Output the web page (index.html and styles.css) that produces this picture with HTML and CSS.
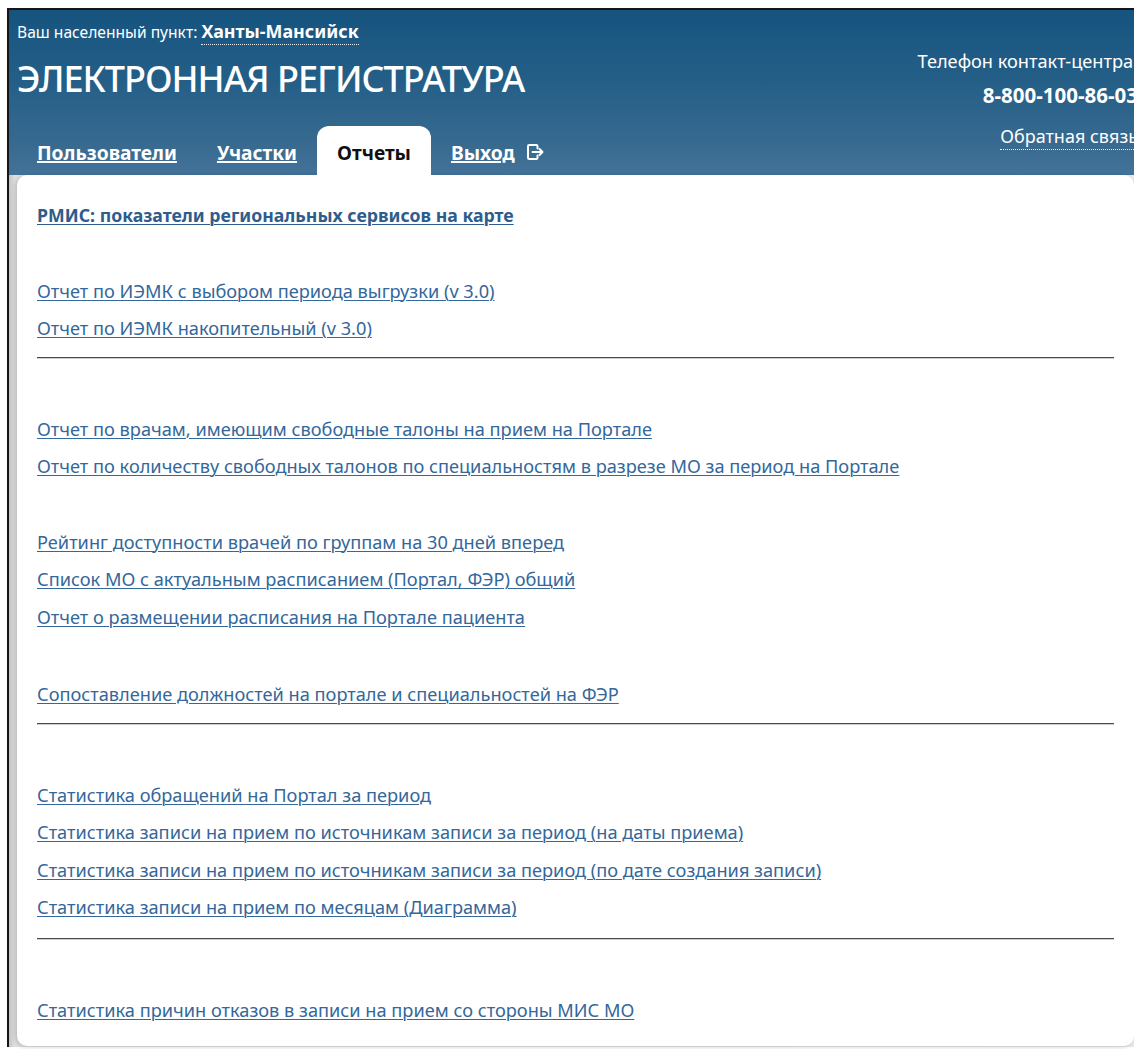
FILE: index.html
```html
<!DOCTYPE html>
<html lang="ru">
<head>
<meta charset="utf-8">
<title>Электронная регистратура — Отчеты</title>
<link rel="stylesheet" href="styles.css">
</head>
<body>
<div class="frame">
  <header class="header">
    <div class="brand">
      <div class="location">Ваш населенный пункт: <a class="city" href="#">Ханты-Мансийск</a></div>
      <h1 class="title">ЭЛЕКТРОННАЯ РЕГИСТРАТУРА</h1>
      <nav class="tabs">
        <a class="tab" href="#"><span class="tab-label">Пользователи</span></a>
        <a class="tab" href="#"><span class="tab-label">Участки</span></a>
        <span class="tab tab-active">Отчеты</span>
        <a class="tab" href="#"><span class="tab-label">Выход</span><svg class="exit-icon" viewBox="0 0 18 18" width="18" height="18" aria-hidden="true"><path d="M11.5 5.5V3.2a1.2 1.2 0 0 0-1.2-1.2H3.2A1.2 1.2 0 0 0 2 3.2v11.6A1.2 1.2 0 0 0 3.2 16h7.1a1.2 1.2 0 0 0 1.2-1.2v-2.3" fill="none" stroke="#fff" stroke-width="2" stroke-linecap="round"/><path d="M6.5 9H16.5M13.5 6l3 3-3 3" fill="none" stroke="#fff" stroke-width="2" stroke-linecap="round" stroke-linejoin="round"/></svg></a>
      </nav>
    </div>
    <div class="contacts">
      <div class="contacts-label">Телефон контакт-центра:</div>
      <div class="contacts-phone">8-800-100-86-03</div>
      <div class="contacts-feedback"><a href="#">Обратная связь</a></div>
    </div>
  </header>

  <main class="panel">
    <div class="group">
      <a class="report report-main" href="#">РМИС: показатели региональных сервисов на карте</a>
    </div>
    <div class="group">
      <a class="report" href="#">Отчет по ИЭМК с выбором периода выгрузки (v 3.0)</a>
      <a class="report" href="#">Отчет по ИЭМК накопительный (v 3.0)</a>
    </div>
    <hr class="divider">
    <div class="group group-first">
      <a class="report" href="#">Отчет по врачам, имеющим свободные талоны на прием на Портале</a>
      <a class="report" href="#">Отчет по количеству свободных талонов по специальностям в разрезе МО за период на Портале</a>
    </div>
    <div class="group">
      <a class="report" href="#">Рейтинг доступности врачей по группам на 30 дней вперед</a>
      <a class="report" href="#">Список МО с актуальным расписанием (Портал, ФЭР) общий</a>
      <a class="report" href="#">Отчет о размещении расписания на Портале пациента</a>
    </div>
    <div class="group group-wide">
      <a class="report" href="#">Сопоставление должностей на портале и специальностей на ФЭР</a>
    </div>
    <hr class="divider">
    <div class="group group-first">
      <a class="report" href="#">Статистика обращений на Портал за период</a>
      <a class="report" href="#">Статистика записи на прием по источникам записи за период (на даты приема)</a>
      <a class="report" href="#">Статистика записи на прием по источникам записи за период (по дате создания записи)</a>
      <a class="report" href="#">Статистика записи на прием по месяцам (Диаграмма)</a>
    </div>
    <hr class="divider divider-low">
    <div class="group group-first">
      <a class="report" href="#">Статистика причин отказов в записи на прием со стороны МИС МО</a>
    </div>
  </main>
</div>
</body>
</html>
```
FILE: styles.css
```css
html, body {
  margin: 0;
  padding: 0;
  height: 100%;
  overflow: hidden;
  background: #fff;
}

body {
  font-family: "Noto Sans", "Open Sans", "Liberation Sans", sans-serif;
  color: #222;
}

a {
  color: inherit;
}

/* outer window frame */
.frame {
  margin: 8px 0 0 7px;
  border-top: 2px solid #161616;
  border-left: 2px solid #161616;
  background: linear-gradient(90deg, #c4c4c4 0, #e2e2e2 6px, #e9e9e9 100%);
  min-height: calc(100vh - 10px);
  box-sizing: border-box;
}

/* blue header */
.header {
  height: 165px;
  box-sizing: border-box;
  padding: 10px 0 0 8px;
  display: flex;
  background: linear-gradient(180deg, #15547f 0%, #255f88 45%, #3a6b91 85%, #44739a 100%);
  color: #fff;
}

.brand {
  flex: 1;
  display: flex;
  flex-direction: column;
}

.location {
  font-size: 15.6px;
  line-height: 22px;
  white-space: nowrap;
}

.city {
  font-size: 17.9px;
  font-weight: 700;
  color: #fff;
  text-decoration: none;
  border-bottom: 1px dotted #e6eef5;
  padding-bottom: 1px;
}

.title {
  margin: 16px 0 0;
  font-size: 36px;
  line-height: 40px;
  font-weight: 500;
  letter-spacing: -1px;
  white-space: nowrap;
  color: #fff;
}

.tabs {
  margin-top: auto;
  display: flex;
  align-items: flex-end;
}

.tab {
  display: flex;
  align-items: center;
  height: 49px;
  box-sizing: border-box;
  padding: 3px 20px 0;
  font-size: 19.2px;
  font-weight: 700;
  color: #fff;
  white-space: nowrap;
}

.tab-label {
  text-decoration: underline;
  text-underline-offset: 2px;
}

.tab-active {
  background: #fff;
  color: #111;
  border-radius: 12px 12px 0 0;
}

.exit-icon {
  margin-left: 11px;
  flex: none;
}

/* contact block in the header's right corner */
.contacts {
  flex: none;
  padding-top: 30px;
  margin-right: -4px;
  text-align: right;
  white-space: nowrap;
}

.contacts-label {
  font-size: 18.2px;
  line-height: 22px;
}

.contacts-phone {
  margin-top: 12px;
  font-size: 20.5px;
  line-height: 22px;
  font-weight: 700;
}

.contacts-feedback {
  margin-top: 19px;
  font-size: 18px;
  line-height: 22px;
}

.contacts-feedback a {
  color: #fff;
  text-decoration: none;
  border-bottom: 1px dotted #e6eef5;
  padding-bottom: 1px;
}

/* white content panel with the reports list */
.panel {
  margin-left: 8px;
  padding: 22px 20px 17px;
  background: #fff;
  border-radius: 10px;
  box-shadow: -2px 1px 5px rgba(0, 0, 0, 0.18);
}

.group + .group {
  margin-top: 38px;
}

.group-first {
  margin-top: 52px;
}

.group-wide {
  margin-top: 40px !important;
}

.report {
  display: block;
  width: max-content;
  font-size: 18.2px;
  line-height: 37.5px;
  color: #34679a;
  text-decoration: underline;
  text-underline-offset: 2px;
  text-decoration-thickness: 1px;
}

.report-main {
  font-size: 17.7px;
  font-weight: 700;
  color: #2e5d8b;
}

.divider {
  margin: 9px 0 0;
  height: 0;
  border: 0;
  border-top: 1px solid #4a4a4a;
  border-bottom: 1px solid #cfcfcf;
}

.divider-low {
  margin-top: 11px;
}
```
